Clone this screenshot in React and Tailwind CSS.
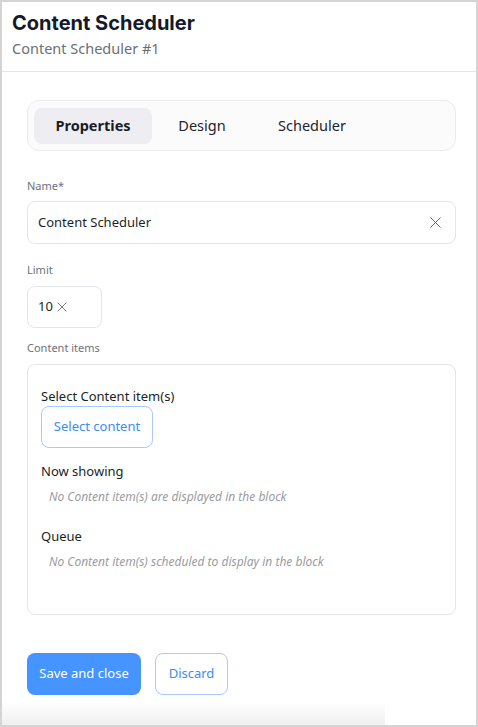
import { X } from "lucide-react";

const body = { fontFamily: '"Noto Sans", "Open Sans", sans-serif' };

const App = () => {
  return (
    <div className="w-[478px] h-[727px] bg-white border-2 border-[#d4d4d4] flex flex-col overflow-hidden" style={body}>
      {/* Header */}
      <div className="px-[10px] pt-[7px] pb-[12px] border-b border-[#e6e6e6]">
        <h1 className="text-[20px] leading-[28px] font-bold text-[#141a29]" style={{ fontFamily: 'Inter, "Noto Sans", sans-serif' }}>
          Content Scheduler
        </h1>
        <p className="text-[14.5px] leading-[22px] text-[#6b6f76]">Content Scheduler #1</p>
      </div>

      <div className="flex-1 pl-[25px] pr-[20px] pt-[28px] flex flex-col">
        {/* Tabs */}
        <div className="h-[51px] rounded-xl border border-[#ececef] bg-[#fbfbfc] p-[6px] flex items-center gap-[2px]">
          <button className="h-[36px] w-[118px] rounded-lg bg-[#eeeef2] text-[14.5px] font-bold text-[#1a1d24]">Properties</button>
          <button className="h-[36px] w-[96px] rounded-lg text-[14.5px] text-[#1f232b]">Design</button>
          <button className="h-[36px] w-[120px] rounded-lg text-[14.5px] text-[#1f232b]">Scheduler</button>
        </div>

        {/* Name */}
        <label className="mt-[27px] text-[11px] leading-[16px] text-[#6f7278]">Name*</label>
        <div className="mt-[7px] h-[43px] rounded-lg border border-[#e4e5e8] flex items-center justify-between pl-[10px] pr-[10px]">
          <span className="text-[13px] text-[#1c1f26]">Content Scheduler</span>
          <X size={19} strokeWidth={1.1} className="text-[#4a4d54]" />
        </div>

        {/* Limit */}
        <label className="mt-[18px] text-[11px] leading-[16px] text-[#6f7278]">Limit</label>
        <div className="mt-[8px] h-[42px] w-[75px] rounded-lg border border-[#e4e5e8] flex items-center pl-[10px] gap-[1px]">
          <span className="text-[13px] text-[#1c1f26]">10</span>
          <X size={16} strokeWidth={1.1} className="text-[#4a4d54]" />
        </div>

        {/* Content items */}
        <label className="mt-[12px] text-[11px] leading-[16px] text-[#6f7278]">Content items</label>
        <div className="mt-[8px] h-[251px] rounded-lg border border-[#e4e5e8] pl-[13px] pt-[21px] flex flex-col items-start">
          <span className="text-[13px] leading-[20px] text-[#1c1f26]">Select Content item(s)</span>
          <button className="h-[42px] w-[112px] rounded-lg border border-[#a8c9fb] text-[13px] text-[#3d8bf5]">Select content</button>
          <span className="mt-[13px] text-[13px] leading-[20px] text-[#1c1f26]">Now showing</span>
          <span className="mt-[8px] ml-[8px] text-[12px] leading-[16px] italic text-[#9a9ca1]">No Content item(s) are displayed in the block</span>
          <span className="mt-[21px] text-[13px] leading-[20px] text-[#1c1f26]">Queue</span>
          <span className="mt-[8px] ml-[8px] text-[12px] leading-[16px] italic text-[#9a9ca1]">No Content item(s) scheduled to display in the block</span>
        </div>

        {/* Actions */}
        <div className="mt-[38px] flex gap-[14px]">
          <button className="h-[42px] w-[114px] rounded-lg bg-[#4594ff] text-[13px] text-white">Save and close</button>
          <button className="h-[42px] w-[73px] rounded-lg border border-[#a8c9fb] text-[13px] text-[#3d8bf5]">Discard</button>
        </div>
      </div>

      {/* Bottom fade */}
      <div className="h-[24px] w-[384px] bg-gradient-to-b from-white to-[#f0f0f0] -ml-px" />
    </div>
  );
};

export default App;
